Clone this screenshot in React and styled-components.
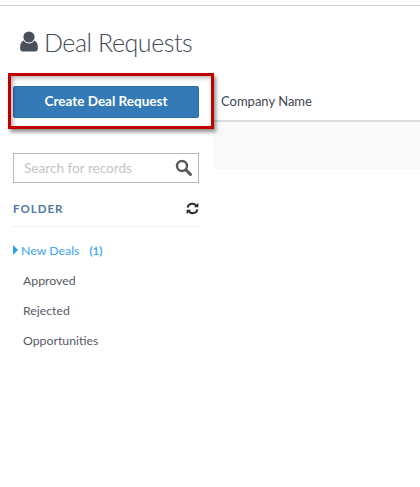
import React from "react";
import styled, { createGlobalStyle } from "styled-components";

const Global = createGlobalStyle`
  html, body { margin: 0; padding: 0; background: #fff; }
  body { font-family: Lato, "Open Sans", sans-serif; overflow: hidden; }
`;
const Page = styled.div`
  position: relative;
  width: 420px;
  height: 487px;
  overflow: hidden;
  padding-top: 5px;
  box-sizing: border-box;
`;
const TopRule = styled.div`
  height: 1px;
  background: #d4d4d4;
`;
const Header = styled.header`
  display: flex;
  align-items: center;
  gap: 6px;
  height: 72px;
  padding-left: 20px;
`;
const Title = styled.h1`
  margin: 0;
  font-size: 25px;
  font-weight: 300;
  letter-spacing: -0.45px;
  color: #454a57;
`;
const Columns = styled.div`
  display: flex;
  padding-left: 13px;
  padding-top: 8px;
`;
const Sidebar = styled.aside`
  width: 186px;
  flex: none;
  display: flex;
  flex-direction: column;
`;
const CreateButton = styled.button`
  height: 32px;
  border: 1px solid #2e6da4;
  border-radius: 2px;
  background: #337ab7;
  color: #fff;
  font: 700 13.5px Lato, sans-serif;
  padding: 0 0 2px;
`;
const Search = styled.div`
  margin-top: 35px;
  height: 30px;
  border: 1px solid #b9b9b9;
  box-sizing: border-box;
  display: flex;
  align-items: center;
  justify-content: space-between;
  padding: 0 6px 1px 10px;
  font-size: 13.6px;
  color: #c4c4c4;
`;
const FolderHead = styled.div`
  margin-top: 16px;
  height: 18px;
  padding-bottom: 9px;
  border-bottom: 1px solid #eee;
  display: flex;
  align-items: center;
  justify-content: space-between;
  font-size: 11.5px;
  font-weight: 700;
  letter-spacing: 1px;
  color: #4f79a5;
`;
const Folders = styled.ul`
  list-style: none;
  margin: 8px 0 0;
  padding: 0;
`;
const Folder = styled.li`
  height: 30px;
  display: flex;
  align-items: center;
  font-size: 12.3px;
  padding-left: ${p => (p.$active ? 0 : "10px")};
  color: ${p => (p.$active ? "#4aa8ec" : "#555a66")};
  font-weight: ${p => (p.$active ? 500 : 400)};
`;
const Caret = styled.span`
  width: 0;
  height: 0;
  border-left: 5px solid #2f9fe8;
  border-top: 5px solid transparent;
  border-bottom: 5px solid transparent;
  margin-right: 3px;
`;
const Count = styled.span`
  margin-left: 10px;
  font-size: 11.5px;
  font-weight: 700;
`;
const Main = styled.main`
  margin-left: 14px;
  flex: 1;
`;
const ColumnHead = styled.div`
  height: 30px;
  padding: 0 0 4px 8px;
  display: flex;
  align-items: center;
  border-bottom: 2px solid #dcdcdc;
  font-size: 13px;
  color: #3f4552;
`;
const EmptyRow = styled.div`
  height: 47px;
  background: #f9f9f9;
`;
const Highlight = styled.div`
  position: absolute;
  left: 8px;
  top: 73px;
  width: 206px;
  height: 56px;
  box-sizing: border-box;
  border: 3px solid #c00000;
  box-shadow: 2px 3px 4px rgba(0,0,0,.45), inset 2px 2px 4px rgba(0,0,0,.3);
  pointer-events: none;
`;

const UserIcon = () => (
  <svg width="18" height="22" viewBox="0 0 18 22">
    <circle cx="9" cy="6" r="5.6" fill="#4a4f5c" />
    <path d="M3.6 9.6C1.4 10.6.4 12.6.2 15.5v2.6c0 1.5 1 2.4 2.5 2.4h12.6c1.5 0 2.5-.9 2.5-2.4v-2.6c-.2-2.9-1.2-4.9-3.4-5.9C13 11.6 11.2 12.4 9 12.4s-4-.8-5.4-2.8z" fill="#4a4f5c" />
  </svg>
);
const SearchIcon = () => (
  <svg width="17" height="17" viewBox="0 0 17 17" fill="none" stroke="#5a5a5a">
    <circle cx="7" cy="7" r="5" strokeWidth="2.4" />
    <path d="M10.8 10.8l4.6 4.6" strokeWidth="3" strokeLinecap="round" />
  </svg>
);
const RefreshIcon = () => (
  <svg width="13" height="13" viewBox="0 0 13 13" fill="none" stroke="#2b2b2b" strokeWidth="2">
    <path d="M1.6 5.6C2.1 3.2 4 1.8 6.4 1.8c1.6 0 2.9.7 3.8 1.8" />
    <path d="M11.4 7.4c-.5 2.4-2.4 3.8-4.8 3.8-1.6 0-2.9-.7-3.8-1.8" />
    <path d="M12.4.8v4.4H8z" fill="#2b2b2b" stroke="none" />
    <path d="M.6 12.2V7.8H5z" fill="#2b2b2b" stroke="none" />
  </svg>
);

export default function App() {
  return (
    <Page>
      <Global />
      <TopRule />
      <Header>
        <UserIcon />
        <Title>Deal Requests</Title>
      </Header>
      <Columns>
        <Sidebar>
          <CreateButton>Create Deal Request</CreateButton>
          <Search>
            <span>Search for records</span>
            <SearchIcon />
          </Search>
          <FolderHead>
            <span>FOLDER</span>
            <RefreshIcon />
          </FolderHead>
          <Folders>
            <Folder $active>
              <Caret />
              New Deals
              <Count>(1)</Count>
            </Folder>
            <Folder>Approved</Folder>
            <Folder>Rejected</Folder>
            <Folder>Opportunities</Folder>
          </Folders>
        </Sidebar>
        <Main>
          <ColumnHead>Company Name</ColumnHead>
          <EmptyRow />
        </Main>
      </Columns>
      <Highlight />
    </Page>
  );
}
